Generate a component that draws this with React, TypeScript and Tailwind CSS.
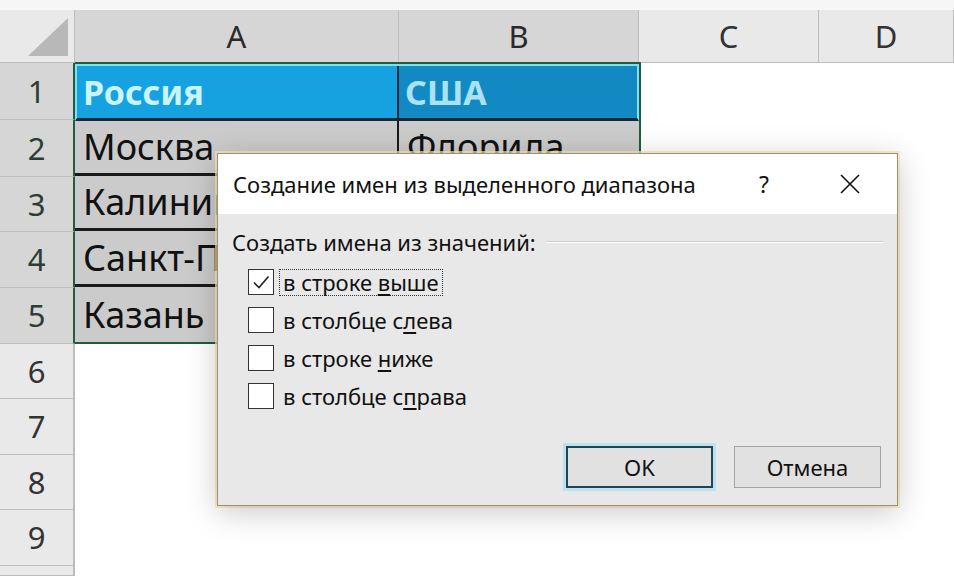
import React from "react";

const font = { fontFamily: '"Noto Sans", "Open Sans", sans-serif' };

function Header({ label, selected, className = "" }: { label: string; selected?: boolean; className?: string }) {
  return (
    <div
      className={`flex items-center justify-center border-r border-[#bdbdbd] text-[31px] leading-none ${
        selected ? "bg-[#d6d6d6] text-[#2a2a2a]" : "bg-[#e9e9e9] text-[#333]"
      } ${className}`}
    >
      {label}
    </div>
  );
}

function RowNum({ n, selected, h }: { n?: number; selected?: boolean; h: string }) {
  return (
    <div
      className={`flex items-center justify-center border-b border-[#bdbdbd] border-r-2 ${
        selected ? "bg-[#d6d6d6] text-[#2c3d33] border-r-[#1e5e3a]" : "bg-[#e9e9e9] text-[#333] border-r-[#bdbdbd]"
      } text-[31px] leading-none ${h}`}
    >
      {n}
    </div>
  );
}

function Check({ checked, label, focus }: { checked?: boolean; label: [string, string, string]; focus?: boolean }) {
  return (
    <div className="flex items-center h-[38px]">
      <div className="w-[26px] h-[26px] border-[1.5px] border-[#333] bg-white flex items-center justify-center">
        {checked && (
          <svg width="20" height="20" viewBox="0 0 20 20">
            <path d="M3 10.5 L8 15.5 L17.5 4.5" fill="none" stroke="#222" strokeWidth="1.6" />
          </svg>
        )}
      </div>
      <div
        className={`ml-[5px] px-[3px] text-[22px] leading-[25px] text-[#111] ${
          focus ? "border border-dotted border-[#333]" : "border border-transparent"
        }`}
      >
        {label[0]}
        <span className="underline underline-offset-[3px]">{label[1]}</span>
        {label[2]}
      </div>
    </div>
  );
}

export default function App() {
  const rowH = ["h-[57px]", "h-[57px]", "h-[55px]", "h-[56px]", "h-[56px]", "h-[55px]", "h-[56px]", "h-[55px]", "h-[56px]", "h-[10px]"];
  const data = [
    ["Москва", "Флорида"],
    ["Калининград", "Техас"],
    ["Санкт-Петербург", "Калифорния"],
    ["Казань", "Аляска"],
  ];
  return (
    <div className="relative w-[954px] h-[578px] overflow-hidden bg-white" style={font}>
      <div className="h-[10px] bg-[#f6f6f6]" />
      {/* column headers */}
      <div className="flex h-[53px] border-b border-[#bdbdbd]">
        <div className="w-[75px] bg-[#e9e9e9] border-r border-[#bdbdbd] flex items-end justify-end pr-[6px] pb-[6px]">
          <svg width="40" height="38" viewBox="0 0 40 38">
            <polygon points="40,0 40,38 0,38" fill="#b8b8b8" />
          </svg>
        </div>
        <Header label="A" selected className="w-[324px]" />
        <Header label="B" selected className="w-[240px]" />
        <Header label="C" className="w-[180px]" />
        <Header label="D" className="flex-1" />
      </div>
      <div className="flex">
        <div className="w-[75px] flex flex-col">
          {[1, 2, 3, 4, 5, 6, 7, 8, 9].map((n, i) => (
            <RowNum key={n} n={n} selected={n <= 5} h={rowH[i]} />
          ))}
          <RowNum h={rowH[9]} />
        </div>
        <div className="flex flex-col">
          {/* selected range */}
          <div className="w-[566px] border-2 border-[#1f5d3c] border-l-0 -mt-px">
            <div className="flex h-[57px] border-2 border-[#7fe0f0] border-b-[3px] border-b-[#0f2a3a]">
              <div className="w-[322px] bg-[#16a2e0] flex items-center pl-[6px] border-r-2 border-[#0f2a3a]">
                <span className="text-[34px] font-bold text-[#c9f4fb]">Россия</span>
              </div>
              <div className="flex-1 bg-[#1289c2] flex items-center pl-[6px]">
                <span className="text-[34px] font-bold text-[#a9e2f2]">США</span>
              </div>
            </div>
            {data.map((r, i) => (
              <div
                key={i}
                className={`flex ${["h-[55px]", "h-[55px]", "h-[56px]", "h-[55px]"][i]} ${i < 3 ? "border-b-[3px] border-[#1a1a1a]" : ""}`}
              >
                <div className="w-[324px] bg-[#cbcbcb] flex items-center pl-[8px] border-r-2 border-[#1a1a1a] overflow-hidden whitespace-nowrap">
                  <span className="text-[36px] text-[#111]">{r[0]}</span>
                </div>
                <div className="flex-1 bg-[#cbcbcb] flex items-center pl-[8px] overflow-hidden whitespace-nowrap">
                  <span className="text-[36px] text-[#111]">{r[1]}</span>
                </div>
              </div>
            ))}
          </div>
        </div>
      </div>

      {/* dialog */}
      <div className="absolute left-[217px] top-[153px] w-[681px] h-[353px] border border-[#9c9070] bg-[#e8e8e8] shadow-[0_6px_30px_rgba(0,0,0,0.22),0_0_0_2px_rgba(250,235,190,0.7)] flex flex-col">
        <div className="h-[60px] bg-white flex items-center pl-[15px] text-[22px] text-[#111]">
          <span className="flex-1 whitespace-nowrap">Создание имен из выделенного диапазона</span>
          <span className="w-[30px] text-center mr-[60px] text-[23px]">?</span>
          <svg width="22" height="22" viewBox="0 0 22 22" className="mr-[36px]">
            <path d="M2 2 L20 20 M20 2 L2 20" stroke="#111" strokeWidth="1.6" />
          </svg>
        </div>
        <div className="flex-1 flex flex-col pl-[14px] pr-[14px]">
          <div className="flex items-center mt-[15px] h-[26px]">
            <span className="text-[22px] text-[#111] leading-[26px] whitespace-nowrap">Создать имена из значений:</span>
            <div className="flex-1 ml-[10px] border-t border-[#d0d0d0] border-b border-b-white" />
          </div>
          <div className="mt-[8px] pl-[16px] flex flex-col">
            <Check checked focus label={["в строке ", "в", "ыше"]} />
            <Check label={["в столбце с", "л", "ева"]} />
            <Check label={["в строке ", "н", "иже"]} />
            <Check label={["в столбце с", "п", "рава"]} />
          </div>
          <div className="flex-1" />
          <div className="flex justify-end gap-[21px] mb-[17px] pr-[2px]">
            <div className="w-[147px] h-[42px] bg-[#e1e1e1] border-2 border-[#1c4656] shadow-[0_0_0_3px_rgba(160,220,245,0.6)] flex items-center justify-center text-[22px] text-[#111]">
              OK
            </div>
            <div className="w-[147px] h-[42px] bg-[#e1e1e1] border border-[#a5a5a5] flex items-center justify-center text-[22px] text-[#111]">
              Отмена
            </div>
          </div>
        </div>
      </div>
    </div>
  );
}
